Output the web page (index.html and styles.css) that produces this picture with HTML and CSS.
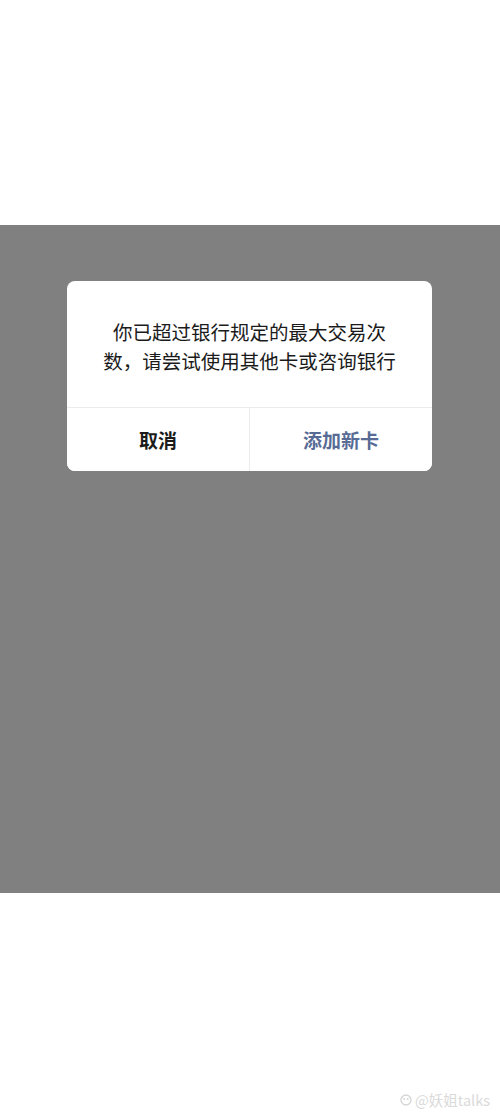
FILE: index.html
```html
<!DOCTYPE html>
<html lang="zh-CN">
<head>
  <meta charset="UTF-8">
  <meta name="viewport" content="width=device-width, initial-scale=1.0">
  <title>提示</title>
  <link rel="stylesheet" href="styles.css">
</head>
<body>
  <div class="page-top"></div>

  <div class="mask">
    <div class="dialog">
      <div class="dialog-body">
        <p>你已超过银行规定的最大交易次数，请尝试使用其他卡或咨询银行</p>
      </div>
      <div class="dialog-actions">
        <button class="btn btn-cancel">取消</button>
        <button class="btn btn-primary">添加新卡</button>
      </div>
    </div>
  </div>

  <div class="page-bottom">
    <div class="watermark">
      <svg width="12" height="12" viewBox="0 0 12 12">
        <circle cx="6" cy="6" r="5" fill="none" stroke="#d6d6d6" stroke-width="1.4"/>
        <circle cx="4.3" cy="5" r="1" fill="#d6d6d6"/>
        <circle cx="7.7" cy="5" r="1" fill="#d6d6d6"/>
      </svg>
      <span>@妖姐talks</span>
    </div>
  </div>
</body>
</html>
```

FILE: styles.css
```css
body {
  margin: 0;
  font-family: "Noto Sans CJK SC", "Noto Sans", sans-serif;
  background: #fff;
}
.page-top {
  height: 225px;
}
.mask {
  height: 668px;
  background: #808080;
  padding-top: 56px;
  box-sizing: border-box;
}
.dialog {
  width: 365px;
  margin-left: 67px;
  background: #fff;
  border-radius: 8px;
  overflow: hidden;
}
.dialog-body {
  padding: 36px 30px 32px;
  text-align: center;
}
.dialog-body p {
  margin: 0;
  font-size: 19.5px;
  line-height: 29px;
  color: #1b1b1b;
}
.dialog-actions {
  display: flex;
  border-top: 1px solid #ececec;
}
.btn {
  flex: 1;
  height: 63px;
  border: none;
  background: #fff;
  font-family: inherit;
  font-size: 19px;
  font-weight: 700;
  padding: 0;
}
.btn-cancel {
  color: #1b1b1b;
  border-right: 1px solid #ececec;
}
.btn-primary {
  color: #576b95;
}
.page-bottom {
  height: 226px;
  display: flex;
  flex-direction: column;
  justify-content: flex-end;
  align-items: flex-end;
}
.watermark {
  display: flex;
  align-items: center;
  gap: 3px;
  padding: 0 10px 11px 0;
  color: #dadada;
  font-size: 14.5px;
  line-height: 16px;
}
```
